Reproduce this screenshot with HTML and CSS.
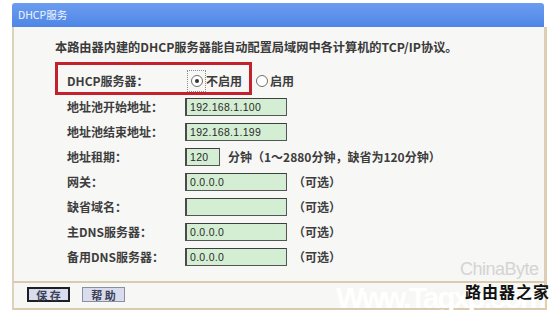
FILE: index.html
```html
<!DOCTYPE html>
<html lang="zh-CN">
<head>
<meta charset="utf-8">
<title>DHCP服务</title>
<link rel="stylesheet" href="styles.css">
</head>
<body>
<div class="panel">
  <div class="title">DHCP服务</div>
  <div class="body">
    <p class="desc">本路由器内建的DHCP服务器能自动配置局域网中各计算机的TCP/IP协议。</p>
    <div class="form">
      <div class="row first">
        <span class="label">DHCP服务器：</span>
        <span class="field">
          <span class="focus"><span class="radio on"></span></span>
          <span class="opt">不启用</span>
          <span class="radio second"></span>
          <span class="opt">启用</span>
        </span>
        <span class="mark"></span>
      </div>
      <div class="row"><span class="label">地址池开始地址：</span><span class="input">192.168.1.100</span></div>
      <div class="row"><span class="label">地址池结束地址：</span><span class="input">192.168.1.199</span></div>
      <div class="row"><span class="label">地址租期：</span><span class="input short">120</span><span class="note lease">分钟（1～2880分钟，缺省为120分钟）</span></div>
      <div class="row"><span class="label">网关：</span><span class="input">0.0.0.0</span><span class="note">（可选）</span></div>
      <div class="row"><span class="label">缺省域名：</span><span class="input"></span><span class="note">（可选）</span></div>
      <div class="row"><span class="label">主DNS服务器：</span><span class="input">0.0.0.0</span><span class="note">（可选）</span></div>
      <div class="row"><span class="label">备用DNS服务器：</span><span class="input">0.0.0.0</span><span class="note">（可选）</span></div>
    </div>
  </div>
  <div class="foot">
    <span class="btn default">保 存</span>
    <span class="btn">帮 助</span>
  </div>
  <div class="watermark">
    <span class="wm-cb">ChinaByte</span>
    <span class="wm-url">Www.Tagxp.com</span>
    <span class="wm-cn">路由器之家</span>
  </div>
</div>
</body>
</html>
```
FILE: styles.css
```css
html, body {
  margin: 0;
  padding: 0;
  background: #ffffff;
}
body {
  width: 554px;
  height: 319px;
  overflow: hidden;
  font-family: "Noto Sans CJK SC", "DejaVu Sans", sans-serif;
  color: #333333;
}
.panel {
  position: relative;
  margin: 3px 0 0 12px;
  width: 535px;
}
.title {
  height: 24px;
  box-sizing: border-box;
  padding-left: 6px;
  line-height: 24px;
  font-size: 10.5px;
  color: #f4f7ff;
  background: linear-gradient(#6b9df0, #4f86e6);
  border-radius: 3px 3px 0 0;
  margin-right: 3px;
}
.body {
  height: 256px;
  box-sizing: border-box;
  padding: 12px 0 0 41px;
  background: #f7f7f5;
  border-left: 2px solid #ddd2bc;
  border-right: 3px solid #dccfb4;
  border-bottom: 2px solid #d8cbb0;
}
.desc {
  margin: 0;
  height: 16px;
  line-height: 16px;
  font-size: 12.2px;
  font-weight: bold;
  color: #3a3a3a;
  white-space: nowrap;
}
.form {
  margin-top: 12px;
  padding-left: 12px;
}
.row {
  position: relative;
  display: flex;
  align-items: center;
  height: 25px;
}
.row.first {
  height: 27px;
}
.label {
  width: 118px;
  flex: none;
  font-size: 12px;
  font-weight: bold;
  color: #3d3d3d;
  white-space: nowrap;
}
.field {
  display: flex;
  align-items: center;
  font-size: 12px;
  font-weight: bold;
  color: #3d3d3d;
}
.focus {
  display: flex;
  align-items: center;
  justify-content: center;
  width: 17px;
  height: 20px;
  margin-left: 2px;
  border: 1px dotted #8a8a8a;
}
.radio {
  display: block;
  width: 10px;
  height: 10px;
  border: 1px solid #6f6f6f;
  border-radius: 50%;
  background: #ffffff;
  position: relative;
}
.radio.on::after {
  content: "";
  position: absolute;
  left: 3px;
  top: 3px;
  width: 4px;
  height: 4px;
  border-radius: 50%;
  background: #333333;
}
.radio.second {
  margin-left: 14px;
  margin-right: 2px;
}
.mark {
  position: absolute;
  left: -12px;
  top: -5px;
  width: 197px;
  height: 33px;
  box-sizing: border-box;
  border: 3px solid #c3222c;
  pointer-events: none;
}
.input {
  flex: none;
  width: 102px;
  height: 18px;
  box-sizing: border-box;
  border: 1px solid #555555;
  border-top-color: #3f3f3f;
  border-left: 2px solid #4a4a4a;
  background: #d3eed3;
  padding-left: 3px;
  font-family: "Liberation Sans", "DejaVu Sans", sans-serif;
  font-size: 10.5px;
  line-height: 16px;
  letter-spacing: 0.3px;
  color: #2a2a2a;
}
.input.short {
  width: 35px;
}
.note {
  margin-left: 6px;
  font-size: 12px;
  font-weight: bold;
  color: #3d3d3d;
  white-space: nowrap;
}
.note.lease {
  margin-left: 8px;
}
.foot {
  display: flex;
  gap: 12px;
  height: 27px;
  box-sizing: border-box;
  padding: 4px 0 0 13px;
  background: #f7f7f5;
  border-left: 2px solid #ddd2bc;
  border-right: 3px solid #dccfb4;
  border-bottom: 2px solid #d8cbb0;
}
.btn {
  display: flex;
  align-items: center;
  justify-content: center;
  width: 43px;
  height: 15px;
  box-sizing: border-box;
  border: 1px solid #8a8fa0;
  background: #d9dcec;
  font-size: 11px;
  font-weight: bold;
  color: #3a4258;
  white-space: pre;
}
.btn.default {
  border: 2px solid #1e1e24;
}
.watermark {
  position: absolute;
  left: 322px;
  top: 252px;
  width: 212px;
  height: 64px;
  pointer-events: none;
}
.wm-cb {
  position: absolute;
  left: 126px;
  top: 4px;
  font-family: "Liberation Sans", sans-serif;
  font-size: 18px;
  line-height: 20px;
  color: #d4d4d4;
  letter-spacing: -0.5px;
  white-space: nowrap;
}
.wm-url {
  position: absolute;
  left: 2px;
  top: 26px;
  font-family: "Liberation Sans", sans-serif;
  font-size: 30px;
  line-height: 34px;
  font-weight: bold;
  color: #ffffff;
  letter-spacing: -2.3px;
  white-space: nowrap;
}
.wm-cn {
  position: absolute;
  left: 131px;
  top: 27px;
  font-size: 16px;
  font-weight: bold;
  color: #111111;
  letter-spacing: 1px;
  white-space: nowrap;
  line-height: 18px;
}
```
